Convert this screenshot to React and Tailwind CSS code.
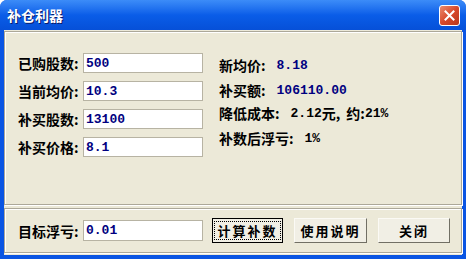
import React from "react";

const cjk = { fontFamily: '"Noto Sans CJK SC", "Noto Sans", sans-serif' };
const mono = { fontFamily: '"Liberation Mono", "Noto Sans CJK SC", monospace' };

function Field({ label, value, h = "h-[20px]" }) {
  return (
    <div className="flex items-center">
      <span className="w-[65px] text-[14px] font-bold text-black whitespace-nowrap leading-none" style={cjk}>
        {label}:
      </span>
      <div className={`w-[120px] ${h} bg-white border border-[#b7b3a3] flex items-center pl-[2px]`}>
        <span className="text-[13px] font-bold text-[#000080] leading-none" style={mono}>{value}</span>
      </div>
    </div>
  );
}

function Btn({ children, focus, w }) {
  return (
    <button
      className={`${w} h-[25px] flex items-center justify-center bg-[#f1efe5] border ${
        focus ? "border-black" : "border-[#fbfaf5] border-r-[#716f64] border-b-[#716f64]"
      }`}
    >
      <span
        className={`flex items-center justify-center text-[13px] font-bold text-black tracking-[2px] leading-none whitespace-nowrap ${
          focus ? "w-[67px] h-[19px] border border-dotted border-black" : ""
        }`}
        style={cjk}
      >
        {children}
      </span>
    </button>
  );
}

export default function App() {
  return (
    <div className="w-[466px] h-[259px] bg-[#0a55e3] rounded-t-[7px] flex flex-col overflow-hidden">
      <div className="h-[30px] flex items-center justify-between pl-[7px] pr-[6px] bg-gradient-to-b from-[#3c8cf8] via-[#0a5de8] to-[#0650d8]">
        <span className="text-white text-[14px] font-bold [text-shadow:1px_1px_0_#0a1c6b]" style={cjk}>补仓利器</span>
        <div className="w-[21px] h-[21px] rounded-[3px] border border-white bg-gradient-to-br from-[#e98a6e] via-[#d8482a] to-[#b8381c] flex items-center justify-center">
          <svg width="11" height="11" viewBox="0 0 11 11">
            <path d="M1.5 1.5 L9.5 9.5 M9.5 1.5 L1.5 9.5" stroke="white" strokeWidth="2" strokeLinecap="square" />
          </svg>
        </div>
      </div>
      <div className="flex-1 mx-[4px] mb-[4px] bg-[#ece9d8] flex flex-col pt-[1px] gap-[3px]">
        <div className="h-[174px] border border-[#aca899] shadow-[inset_1px_1px_0_#ffffff,1px_1px_0_#ffffff] flex pl-[13px]">
          <div className="flex flex-col gap-[8px] pt-[21px]">
            <Field label="已购股数" value="500" />
            <Field label="当前均价" value="10.3" />
            <Field label="补买股数" value="13100" />
            <Field label="补买价格" value="8.1" />
          </div>
          <div className="ml-[16px] pt-[26px] flex flex-col text-[14px] font-bold text-black leading-none" style={cjk}>
            <div className="h-[14px] flex items-center whitespace-nowrap">
              新均价: <span className="ml-[11px] text-[#000080] text-[13px]" style={mono}>8.18</span>
            </div>
            <div className="h-[14px] mt-[11px] flex items-center whitespace-nowrap">
              补买额: <span className="ml-[11px] text-[#000080] text-[13px]" style={mono}>106110.00</span>
            </div>
            <div className="h-[14px] mt-[9px] flex items-center whitespace-nowrap">
              降低成本: <span className="ml-[11px] text-[13px]" style={mono}>2.12</span>元,<span className="ml-[6px]">约:</span><span className="text-[13px]" style={mono}>21%</span>
            </div>
            <div className="h-[14px] mt-[11px] flex items-center whitespace-nowrap">
              补数后浮亏: <span className="ml-[11px] text-[13px]" style={mono}>1%</span>
            </div>
          </div>
        </div>
        <div className="h-[45px] border border-[#aca899] shadow-[inset_1px_1px_0_#ffffff,1px_1px_0_#ffffff] flex items-center pl-[13px]">
          <Field label="目标浮亏" value="0.01" h="h-[21px]" />
          <div className="flex items-center ml-[9px] gap-[11px]">
            <Btn focus w="w-[71px]">计算补数</Btn>
            <Btn w="w-[73px]">使用说明</Btn>
            <Btn w="w-[72px]">关闭</Btn>
          </div>
        </div>
      </div>
    </div>
  );
}
